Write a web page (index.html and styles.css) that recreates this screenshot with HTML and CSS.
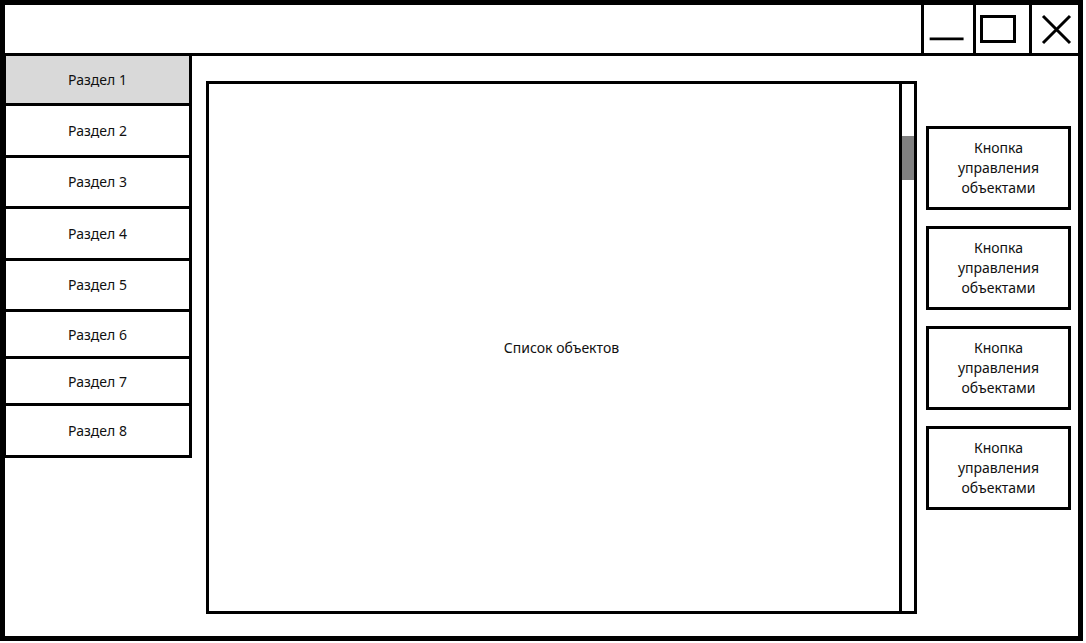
FILE: index.html
```html
<!DOCTYPE html>
<html lang="ru">
<head>
    <meta charset="UTF-8">
    <title>Макет окна</title>
    <link rel="stylesheet" href="styles.css">
</head>
<body>
    <div class="window">
        <div class="titlebar">
            <div class="win-btn win-min">
                <svg width="52" height="48" viewBox="0 0 52 48"><path d="M6 34.5H42" stroke="#000" stroke-width="3"/></svg>
            </div>
            <div class="win-btn win-max">
                <svg width="53" height="48" viewBox="0 0 53 48"><rect x="5.5" y="11.5" width="33" height="25" fill="none" stroke="#000" stroke-width="3"/></svg>
            </div>
            <div class="win-btn win-close">
                <svg width="46" height="48" viewBox="0 0 46 48"><path d="M11 11L38 38M38 11L11 38" stroke="#000" stroke-width="3"/></svg>
            </div>
        </div>

        <div class="content">
            <!-- sections -->
            <div class="sidebar">
                <div class="nav-item active">Раздел 1</div>
                <div class="nav-item">Раздел 2</div>
                <div class="nav-item">Раздел 3</div>
                <div class="nav-item">Раздел 4</div>
                <div class="nav-item">Раздел 5</div>
                <div class="nav-item compact">Раздел 6</div>
                <div class="nav-item compact">Раздел 7</div>
                <div class="nav-item">Раздел 8</div>
            </div>

            <div class="object-list">
                <span>Список объектов</span>
                <div class="scrollbar"><div class="thumb"></div></div>
            </div>

            <div class="actions">
                <div class="action-btn">Кнопка<br>управления<br>объектами</div>
                <div class="action-btn">Кнопка<br>управления<br>объектами</div>
                <div class="action-btn">Кнопка<br>управления<br>объектами</div>
                <div class="action-btn">Кнопка<br>управления<br>объектами</div>
            </div>
        </div>
    </div>
</body>
</html>
```

FILE: styles.css
```css
* {
    box-sizing: border-box;
}

body {
    margin: 0;
    background: #fff;
    color: #111;
    font-family: "Noto Sans", "Open Sans", sans-serif;
    font-size: 14px;
}

.window {
    width: 1083px;
    height: 641px;
    border: 5px solid #000;
    display: flex;
    flex-direction: column;
}

.titlebar {
    height: 51px;
    border-bottom: 3px solid #000;
    display: flex;
    justify-content: flex-end;
    flex-shrink: 0;
}

.win-btn {
    border-left: 3px solid #000;
    display: flex;
}

.win-btn svg {
    display: block;
}

.win-min { width: 52px; }
.win-max { width: 56px; }
.win-close { width: 49px; }

.content {
    flex: 1;
    display: flex;
    align-items: flex-start;
}

.sidebar {
    width: 187px;
    flex-shrink: 0;
    border-right: 3px solid #000;
    border-left: 1px solid #000;
}

.nav-item {
    height: 51.5px;
    border-bottom: 3px solid #000;
    display: flex;
    align-items: center;
    justify-content: center;
}

.nav-item.active {
    height: 50px;
    background: #d9d9d9;
}

.nav-item.compact {
    height: 47px;
}

.object-list {
    position: relative;
    width: 711px;
    height: 533px;
    margin: 25px 0 0 14px;
    border: 3px solid #000;
    display: flex;
    align-items: center;
    justify-content: center;
}

/* scroll track over the right edge */
.scrollbar {
    position: absolute;
    top: 0;
    right: 0;
    bottom: 0;
    width: 15px;
    border-left: 3px solid #000;
}

.thumb {
    margin-top: 52px;
    height: 44px;
    background: #808080;
}

.actions {
    margin: 70px 0 0 9px;
    display: flex;
    flex-direction: column;
    gap: 16px;
}

.action-btn {
    width: 145px;
    height: 84px;
    border: 3px solid #000;
    display: flex;
    align-items: center;
    justify-content: center;
    text-align: center;
    line-height: 20px;
}
```
